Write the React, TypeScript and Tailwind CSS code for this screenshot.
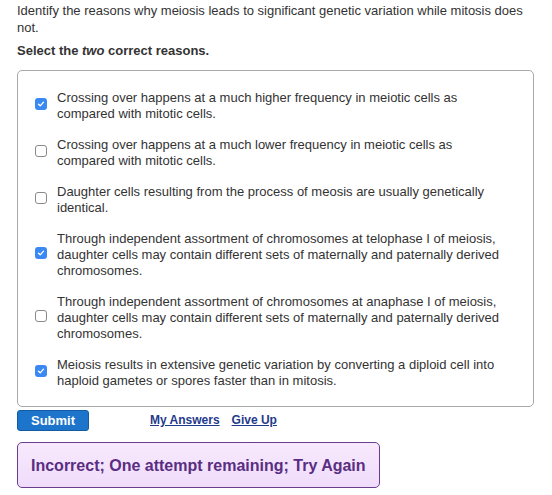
const options = [
  {
    text: 'Crossing over happens at a much higher frequency in meiotic cells as compared with mitotic cells.',
    checked: true,
  },
  {
    text: 'Crossing over happens at a much lower frequency in meiotic cells as compared with mitotic cells.',
    checked: false,
  },
  {
    text: 'Daughter cells resulting from the process of meosis are usually genetically identical.',
    checked: false,
  },
  {
    text: 'Through independent assortment of chromosomes at telophase I of meiosis, daughter cells may contain different sets of maternally and paternally derived chromosomes.',
    checked: true,
  },
  {
    text: 'Through independent assortment of chromosomes at anaphase I of meiosis, daughter cells may contain different sets of maternally and paternally derived chromosomes.',
    checked: false,
  },
  {
    text: 'Meiosis results in extensive genetic variation by converting a diploid cell into haploid gametes or spores faster than in mitosis.',
    checked: true,
  },
];

function Box({ checked }: { checked: boolean }) {
  if (checked) {
    return (
      <span className="flex h-[12px] w-[12px] shrink-0 items-center justify-center rounded-[3px] bg-[#3a89f3]">
        <svg viewBox="0 0 12 12" className="h-[10px] w-[10px]">
          <path d="M3 6.2 L5.1 8.2 L9 3.8" fill="none" stroke="white" strokeWidth="1.6" strokeLinecap="round" strokeLinejoin="round" />
        </svg>
      </span>
    );
  }
  return <span className="block h-[12px] w-[12px] shrink-0 rounded-[3px] border border-[#8a8a8a] bg-white" />;
}

export default function App() {
  return (
    <div className="min-h-[495px] w-[552px] bg-white px-[17px] pt-[2px] text-[13px] leading-[17px] text-[#333] font-['Liberation_Sans',Arial,sans-serif]">
      <p>
        Identify the reasons why meiosis leads to significant genetic variation while mitosis does not.
      </p>
      <p className="mt-[6px] font-bold">
        Select the <em>two</em> correct reasons.
      </p>

      {/* Answer choices */}
      <div className="mt-[11px] mr-[1px] flex flex-col gap-[15px] rounded-[5px] border border-[#a9a9a9] pt-[19px] pb-[17px] pl-[17px] pr-[20px]">
        {options.map((o, i) => (
          <label key={i} className="flex items-center gap-[10px] leading-[16px]">
            <span className="-mt-[4px] flex shrink-0">
              <Box checked={o.checked} />
            </span>
            <span>{o.text}</span>
          </label>
        ))}
      </div>

      {/* Buttons */}
      <div className="mt-[3px] flex items-center">
        <button className="h-[21px] w-[72px] rounded-[3px] border border-[#135ca3] bg-[#1d75cb] text-[13px] font-bold text-white">
          Submit
        </button>
        <a className="ml-[61px] text-[12px] font-bold text-[#1f3a8c] underline">My Answers</a>
        <a className="ml-[12px] text-[12px] font-bold text-[#1f3a8c] underline">Give Up</a>
      </div>

      {/* Feedback */}
      <div className="mt-[11px] flex h-[46px] w-[363px] items-center rounded-[5px] border border-[#6a3c8e] bg-gradient-to-b from-[#f7e9fd] to-[#efdcfb] px-[13px] text-[16px] font-bold text-[#5a2d82]">
        Incorrect; One attempt remaining; Try Again
      </div>
    </div>
  );
}
